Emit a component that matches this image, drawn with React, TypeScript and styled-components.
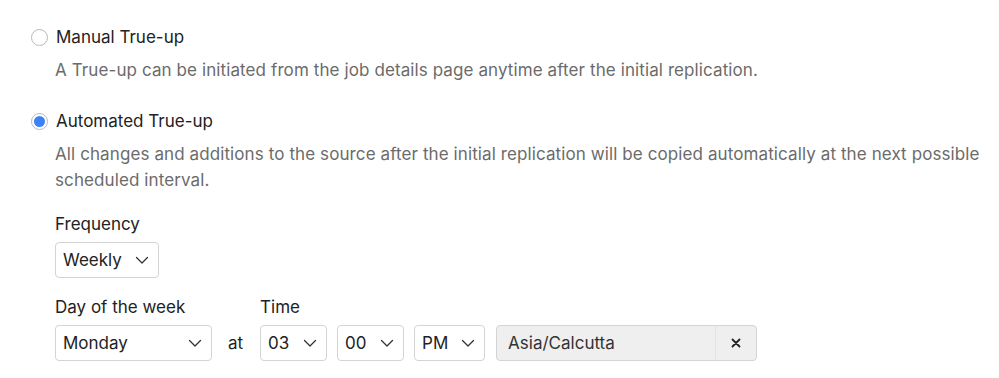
import React, { useState } from "react";
import styled, { createGlobalStyle } from "styled-components";

const GlobalStyle = createGlobalStyle`
  body {
    margin: 0;
    background: #ffffff;
    font-family: "Inter", "Noto Sans", sans-serif;
    color: #222222;
  }
`;

const Wrapper = styled.div`
  padding: 25px 0 0 31px;
  font-size: 17px;
`;

const Option = styled.div<{ $gap?: number }>`
  margin-top: ${(p) => p.$gap || 0}px;
`;

const RadioRow = styled.label`
  display: flex;
  align-items: center;
  gap: 8px;
  line-height: 24px;
  cursor: pointer;
`;

const Radio = styled.span<{ $checked?: boolean }>`
  box-sizing: border-box;
  width: 17px;
  height: 17px;
  border-radius: 50%;
  border: 1px solid #b9b9b9;
  background: #fff;
  display: flex;
  align-items: center;
  justify-content: center;
  flex-shrink: 0;

  &::after {
    content: "";
    width: 11px;
    height: 11px;
    border-radius: 50%;
    background: ${(p) => (p.$checked ? "#3b82f6" : "transparent")};
  }
`;

const Description = styled.p`
  margin: 8px 0 0 24px;
  color: #6b6b6b;
  line-height: 26px;
  max-width: 940px;
  letter-spacing: 0.1px;
`;

const Fields = styled.div`
  margin-left: 24px;
`;

const FieldLabel = styled.div`
  line-height: 24px;
  margin-bottom: 6px;
`;

const Row = styled.div`
  display: flex;
  align-items: flex-end;
  gap: 10px;
`;

const Field = styled.div<{ $top?: number }>`
  display: flex;
  flex-direction: column;
  margin-top: ${(p) => p.$top || 0}px;
`;

const SelectBox = styled.div<{ $width: number }>`
  box-sizing: border-box;
  width: ${(p) => p.$width}px;
  height: 36px;
  border: 1px solid #d4d4d4;
  border-radius: 4px;
  display: flex;
  align-items: center;
  justify-content: space-between;
  padding: 0 9px 0 7px;
  background: #fff;
  color: #222;
`;

const TimeGroup = styled.div`
  display: flex;
  gap: 10px;
`;

const At = styled.span`
  line-height: 36px;
  padding: 0 7px 0 6px;
`;

const ZoneBox = styled.div`
  box-sizing: border-box;
  width: 261px;
  height: 36px;
  border: 1px solid #d4d4d4;
  border-radius: 4px;
  background: #efefef;
  display: flex;
  align-items: center;
  margin-left: 1px;
`;

const ZoneText = styled.span`
  flex: 1;
  padding-left: 11px;
  color: #333;
`;

const Clear = styled.span`
  width: 40px;
  height: 100%;
  border-left: 1px solid #e2e2e2;
  display: flex;
  align-items: center;
  justify-content: center;
`;

const Chevron = () => (
  <svg width="14" height="14" viewBox="0 0 14 14" fill="none">
    <path d="M1.5 4.5l5.5 5.5 5.5-5.5" stroke="#333" strokeWidth="1.3" strokeLinecap="round" strokeLinejoin="round" />
  </svg>
);

const Cross = () => (
  <svg width="10" height="10" viewBox="0 0 10 10" fill="none">
    <path d="M1.5 1.5l7 7M8.5 1.5l-7 7" stroke="#222" strokeWidth="1.8" strokeLinecap="round" />
  </svg>
);

const Select = ({ value, width }: { value: string; width: number }) => (
  <SelectBox $width={width}>
    <span>{value}</span>
    <Chevron />
  </SelectBox>
);

const App = () => {
  const [mode, setMode] = useState("auto");
  return (
    <Wrapper>
      <GlobalStyle />
      <Option>
        <RadioRow onClick={() => setMode("manual")}>
          <Radio $checked={mode === "manual"} />
          Manual True-up
        </RadioRow>
        <Description>
          A True-up can be initiated from the job details page anytime after the initial replication.
        </Description>
      </Option>
      <Option $gap={26}>
        <RadioRow onClick={() => setMode("auto")}>
          <Radio $checked={mode === "auto"} />
          Automated True-up
        </RadioRow>
        <Description>
          All changes and additions to the source after the initial replication will be copied automatically at the next possible scheduled interval.
        </Description>
        <Fields>
          <Field $top={19}>
            <FieldLabel>Frequency</FieldLabel>
            <Select value="Weekly" width={104} />
          </Field>
          <Row>
            <Field $top={17}>
              <FieldLabel>Day of the week</FieldLabel>
              <Select value="Monday" width={157} />
            </Field>
            <At>at</At>
            <Field>
              <FieldLabel>Time</FieldLabel>
              <TimeGroup>
                <Select value="03" width={67} />
                <Select value="00" width={67} />
                <Select value="PM" width={71} />
                <ZoneBox>
                  <ZoneText>Asia/Calcutta</ZoneText>
                  <Clear>
                    <Cross />
                  </Clear>
                </ZoneBox>
              </TimeGroup>
            </Field>
          </Row>
        </Fields>
      </Option>
    </Wrapper>
  );
};

export default App;
